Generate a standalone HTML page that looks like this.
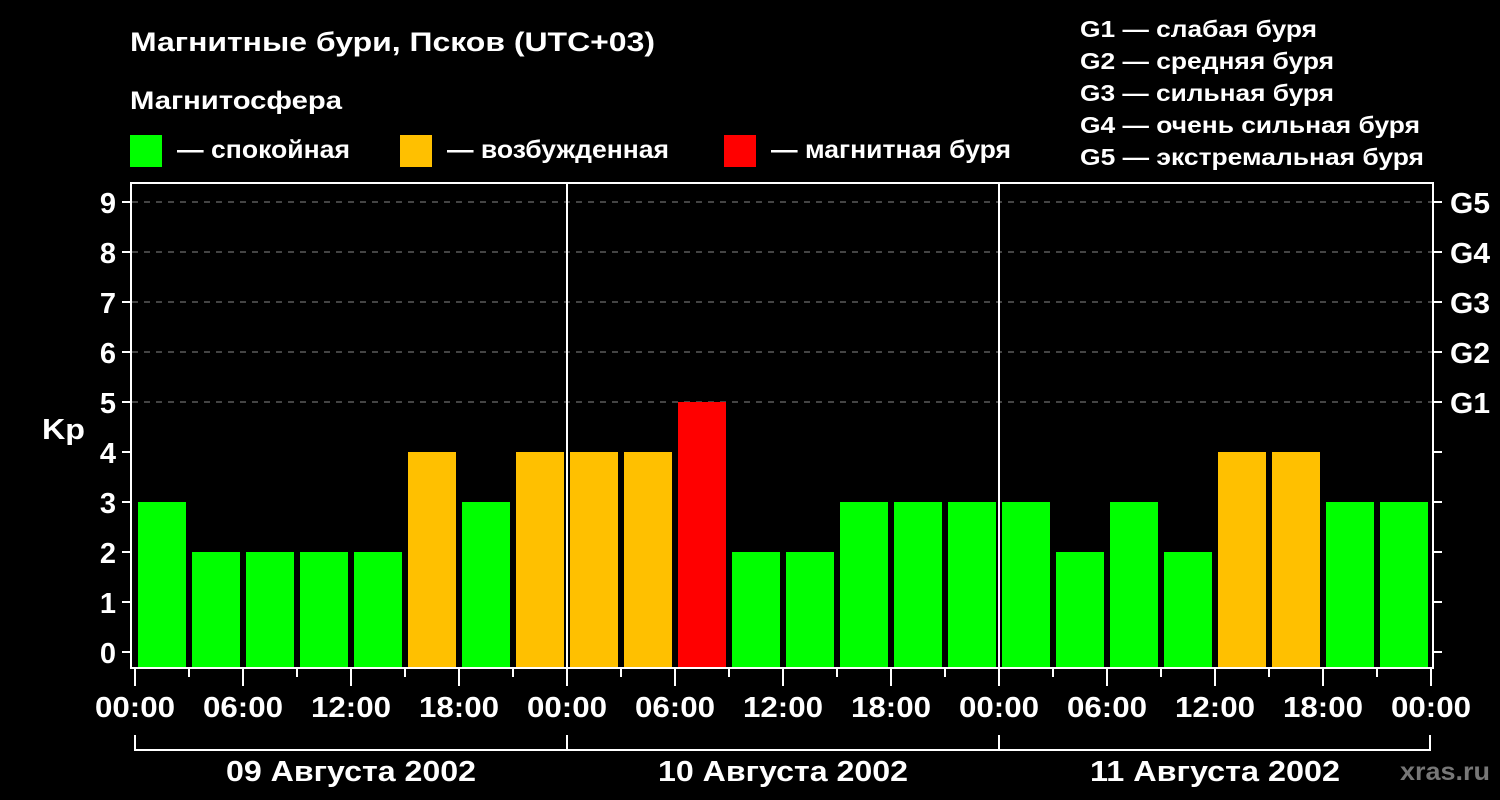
<!DOCTYPE html>
<html><head><meta charset="utf-8"><style>
html,body{margin:0;padding:0;background:#000;width:1500px;height:800px;overflow:hidden}
svg{display:block}
text{font-family:"Liberation Sans",sans-serif;font-weight:bold;fill:#fff}
</style></head><body>
<svg width="1500" height="800" xmlns="http://www.w3.org/2000/svg">
<text x="130" y="51" font-size="27" textLength="525" lengthAdjust="spacingAndGlyphs">Магнитные бури, Псков (UTC+03)</text>
<text x="130" y="109" font-size="25" textLength="212" lengthAdjust="spacingAndGlyphs">Магнитосфера</text>
<rect x="130" y="135" width="32" height="32" fill="#00ff00"/>
<text x="177" y="158" font-size="25" textLength="173" lengthAdjust="spacingAndGlyphs">— спокойная</text>
<rect x="400" y="135" width="32" height="32" fill="#ffc000"/>
<text x="447" y="158" font-size="25" textLength="222" lengthAdjust="spacingAndGlyphs">— возбужденная</text>
<rect x="724" y="135" width="32" height="32" fill="#ff0000"/>
<text x="771" y="158" font-size="25" textLength="240" lengthAdjust="spacingAndGlyphs">— магнитная буря</text>
<g font-size="23">
<text x="1080" y="37" textLength="237" lengthAdjust="spacingAndGlyphs">G1 — слабая буря</text>
<text x="1080" y="69" textLength="254" lengthAdjust="spacingAndGlyphs">G2 — средняя буря</text>
<text x="1080" y="101" textLength="254" lengthAdjust="spacingAndGlyphs">G3 — сильная буря</text>
<text x="1080" y="133" textLength="340" lengthAdjust="spacingAndGlyphs">G4 — очень сильная буря</text>
<text x="1080" y="165" textLength="344" lengthAdjust="spacingAndGlyphs">G5 — экстремальная буря</text>
</g>
<g id="grid" stroke="#888" stroke-width="1" stroke-dasharray="6,6">
<line x1="132" x2="1432" y1="202" y2="202"/>
<line x1="132" x2="1432" y1="252" y2="252"/>
<line x1="132" x2="1432" y1="302" y2="302"/>
<line x1="132" x2="1432" y1="352" y2="352"/>
<line x1="132" x2="1432" y1="402" y2="402"/>
</g>
<g id="bars"></g>
<g stroke="#fff" stroke-width="2" fill="none">
<rect x="131" y="183" width="1302" height="485"/>
<line x1="567" x2="567" y1="183" y2="668"/>
<line x1="999" x2="999" y1="183" y2="668"/>
<path d="M135 735V750H1430V735M567 735V750M999 735V750"/>
</g>
<g id="ticks" stroke="#fff" stroke-width="2"></g>
<g id="ylab" font-size="29" text-anchor="end"></g>
<g id="glab" font-size="29"></g>
<g id="xlab" font-size="29"></g>
<text x="42" y="439" font-size="29" textLength="43" lengthAdjust="spacingAndGlyphs">Kp</text>
<g font-size="29">
<text x="226" y="781" textLength="250" lengthAdjust="spacingAndGlyphs">09 Августа 2002</text>
<text x="658" y="781" textLength="250" lengthAdjust="spacingAndGlyphs">10 Августа 2002</text>
<text x="1090" y="781" textLength="250" lengthAdjust="spacingAndGlyphs">11 Августа 2002</text>
</g>
<text x="1400" y="780" font-size="25" textLength="90" lengthAdjust="spacingAndGlyphs" style="fill:#777">xras.ru</text>
</svg>
<script>
const NS="http://www.w3.org/2000/svg";
function el(p,t,a,txt){const e=document.createElementNS(NS,t);for(const k in a)e.setAttribute(k,a[k]);if(txt!=null)e.textContent=txt;document.getElementById(p).appendChild(e);}
const v=[3,2,2,2,2,4,3,4,4,4,5,2,2,3,3,3,3,2,3,2,4,4,3,3];
v.forEach((k,i)=>{const c=k>=5?"#ff0000":k==4?"#ffc000":"#00ff00";const y=652-50*k;el("bars","rect",{x:138+54*i,y:y,width:48,height:667-y,fill:c});});
for(let k=0;k<=9;k++){const y=652-50*k;el("ticks","line",{x1:122,x2:131,y1:y,y2:y});el("ticks","line",{x1:1433,x2:1442,y1:y,y2:y});el("ylab","text",{x:116,y:y+11},String(k));}
["G1","G2","G3","G4","G5"].forEach((g,i)=>el("glab","text",{x:1450,y:402-50*i+11,textLength:40,lengthAdjust:"spacingAndGlyphs"},g));
const lb=["00:00","06:00","12:00","18:00"];
for(let i=0;i<=24;i++){const x=135+54*i;const maj=i%2==0;el("ticks","line",{x1:x,x2:x,y1:668,y2:maj?686:677});if(maj)el("xlab","text",{x:x-40,y:717,textLength:80,lengthAdjust:"spacingAndGlyphs"},lb[(i/2)%4]);}
</script>
</body></html>
